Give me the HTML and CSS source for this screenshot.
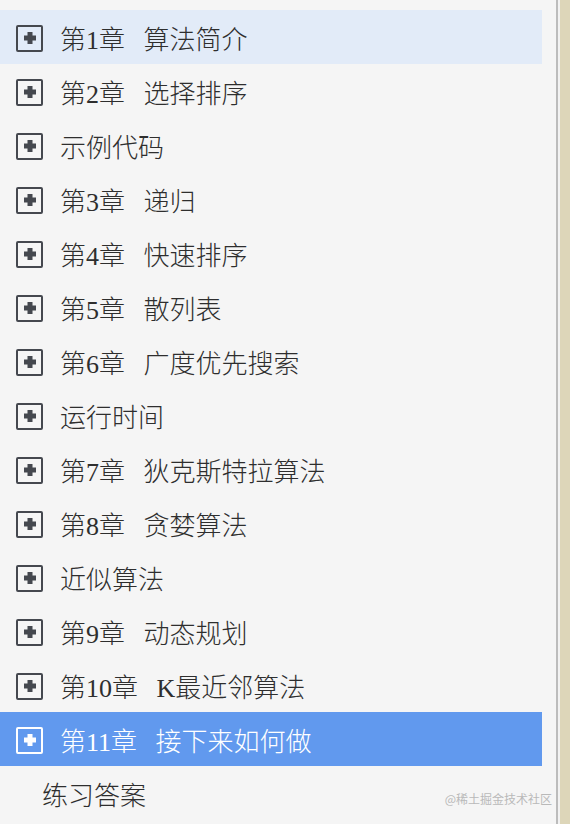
FILE: index.html
```html
<!DOCTYPE html>
<html lang="zh-CN">
<head>
  <meta charset="UTF-8">
  <meta name="viewport" content="width=device-width, initial-scale=1.0">
  <title>目录</title>
  <link rel="stylesheet" href="styles.css">
</head>
<body>
  <div class="page">
    <div class="panel">
      <ul class="toc">
        <li class="item hover"><span class="toggle"></span>第1章 算法简介</li>
        <li class="item"><span class="toggle"></span>第2章 选择排序</li>
        <li class="item"><span class="toggle"></span>示例代码</li>
        <li class="item"><span class="toggle"></span>第3章 递归</li>
        <li class="item"><span class="toggle"></span>第4章 快速排序</li>
        <li class="item"><span class="toggle"></span>第5章 散列表</li>
        <li class="item"><span class="toggle"></span>第6章 广度优先搜索</li>
        <li class="item"><span class="toggle"></span>运行时间</li>
        <li class="item"><span class="toggle"></span>第7章 狄克斯特拉算法</li>
        <li class="item"><span class="toggle"></span>第8章 贪婪算法</li>
        <li class="item"><span class="toggle"></span>近似算法</li>
        <li class="item"><span class="toggle"></span>第9章 动态规划</li>
        <li class="item"><span class="toggle"></span>第10章 K最近邻算法</li>
        <li class="item active"><span class="toggle"></span>第11章 接下来如何做</li>
        <li class="item leaf">练习答案</li>
      </ul>
      <div class="watermark">@稀土掘金技术社区</div>
    </div>
    <div class="edge"></div>
  </div>
</body>
</html>
```

FILE: styles.css
```css
html, body {
  margin: 0;
  padding: 0;
  height: 100%;
}

body {
  font-family: "Liberation Serif", "Noto Sans CJK SC", serif;
  background: #f5f5f5;
}

.page {
  display: flex;
  height: 824px;
}

.panel {
  position: relative;
  width: 556px;
  border-right: 2px solid #bcbcbc;
  background: #f5f5f5;
}

.edge {
  flex: 1;
  border-left: 2px solid #f2f2f2;
  background: #ddd6b9;
}

.toc {
  list-style: none;
  margin: 0;
  padding: 10px 14px 0 0;
}

.item {
  display: flex;
  align-items: center;
  height: 54px;
  padding-left: 16px;
  font-size: 26px;
  font-weight: 300;
  word-spacing: 12px;
  color: #2e2e2e;
  white-space: pre;
}

.item.hover {
  background: #e2ebf8;
}

.item.active {
  background: #6199ee;
  color: #fff;
}

.item.leaf {
  padding-left: 42px;
}

.toggle {
  position: relative;
  box-sizing: border-box;
  width: 27px;
  height: 27px;
  margin-right: 17px;
  margin-top: 2px;
  border: 2px solid #45484f;
  border-radius: 2px;
}

.toggle::before,
.toggle::after {
  content: "";
  position: absolute;
  left: 50%;
  top: 50%;
  background: #45484f;
  transform: translate(-50%, -50%);
}

.toggle::before {
  width: 12px;
  height: 5px;
}

.toggle::after {
  width: 5px;
  height: 12px;
}

.active .toggle {
  border-color: #fff;
}

.active .toggle::before,
.active .toggle::after {
  background: #fff;
}

.watermark {
  position: absolute;
  right: 4px;
  bottom: 17px;
  font-family: "Noto Sans CJK SC", sans-serif;
  font-size: 12px;
  color: #b9b9b9;
}
```
